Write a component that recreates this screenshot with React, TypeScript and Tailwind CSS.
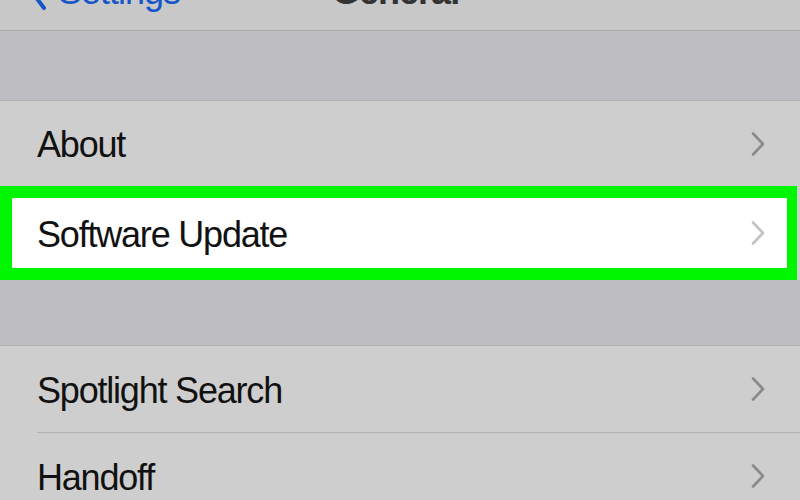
const font = { fontFamily: '"Liberation Sans", Arial, sans-serif' };

function Chevron({ light }: { light?: boolean }) {
  return (
    <svg width="18" height="26" viewBox="0 0 18 26" fill="none">
      <path
        d="M4 2.5 L14 13 L4 23.5"
        stroke={light ? '#c2c2c2' : '#8a8a8a'}
        strokeWidth="2.6"
        strokeLinecap="round"
        strokeLinejoin="round"
      />
    </svg>
  );
}

function Row({ label, light }: { label: string; light?: boolean }) {
  return (
    <div className="flex h-full items-center justify-between pl-[37px] pr-[33px]">
      <span className="pt-[3px] text-[36px] leading-none tracking-[-1.2px] text-[#111]">{label}</span>
      <Chevron light={light} />
    </div>
  );
}

export default function App() {
  return (
    <div className="flex h-[500px] w-[800px] flex-col overflow-hidden bg-[#cecece]" style={font}>
      {/* nav bar, mostly cropped off the top */}
      <div className="relative h-[31px] shrink-0 border-b border-[#a8a8a8] bg-[#c8c8c8]">
        <div className="-mt-[26px] flex h-[36px] items-start">
          <div className="flex items-start pl-[28px] text-[#1556c9]">
            <svg width="22" height="36" viewBox="0 0 22 36" fill="none">
              <path d="M16 2 L4 18 L16 34" stroke="#1556c9" strokeWidth="4" strokeLinecap="round" strokeLinejoin="round" />
            </svg>
            <span className="ml-[8px] text-[36px] leading-[36px] tracking-[-1px]">Settings</span>
          </div>
          <span className="ml-[152px] text-[36px] font-semibold leading-[36px] tracking-[-1px] text-[#333]">General</span>
        </div>
      </div>

      {/* section gap */}
      <div className="h-[70px] shrink-0 border-b border-[#b3b3b3] bg-[#bebdc2]" />

      <div className="h-[85px] shrink-0 bg-[#cecece]">
        <Row label="About" />
      </div>

      {/* highlighted row */}
      <div className="mr-[3px] h-[94px] shrink-0 border-y-[12px] border-l-[12px] border-r-[10px] border-[#00f500] bg-white">
        <div className="-ml-[12px] h-full">
          <div className="flex h-full items-center justify-between pl-[37px] pr-[20px]">
            <span className="pt-[3px] text-[36px] leading-none tracking-[-1.2px] text-[#111]">Software Update</span>
            <Chevron light />
          </div>
        </div>
      </div>

      {/* section gap */}
      <div className="h-[66px] shrink-0 border-b border-[#b3b3b3] bg-[#bebdc2]" />

      <div className="h-[86px] shrink-0 bg-[#cecece]">
        <Row label="Spotlight Search" />
      </div>
      <div className="ml-[37px] h-px shrink-0 bg-[#b3b3b3]" />
      <div className="h-[86px] shrink-0 bg-[#cecece]">
        <Row label="Handoff" />
      </div>
    </div>
  );
}
